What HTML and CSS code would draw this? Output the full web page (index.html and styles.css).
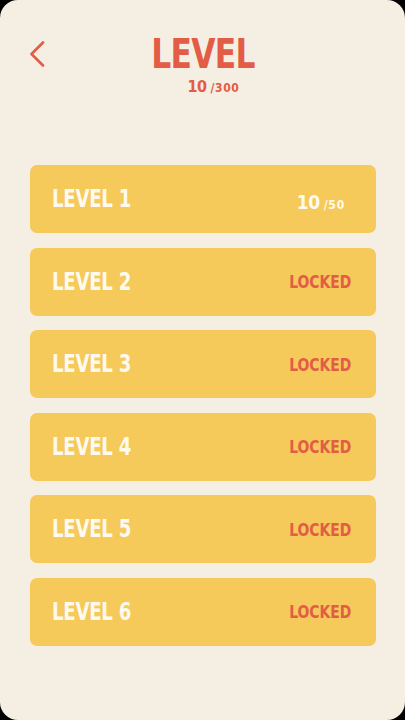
FILE: index.html
```html
<!DOCTYPE html>
<html lang="en">
<head>
<meta charset="utf-8">
<title>Level</title>
<link rel="stylesheet" href="styles.css">
</head>
<body>
<div class="screen">
  <header class="header">
    <button class="back" aria-label="Back">
      <svg width="16" height="26" viewBox="0 0 16 26"><path d="M14 1.5 L2.5 13 L14 24.5" fill="none" stroke="#e25c46" stroke-width="2.6" stroke-linecap="round" stroke-linejoin="round"/></svg>
    </button>
    <div class="title-block">
      <h1 class="title">LEVEL</h1>
      <div class="total"><span class="big">10</span><span class="small">/300</span></div>
    </div>
    <div class="spacer"></div>
  </header>
  <main class="levels">
    <div class="card"><span class="name">LEVEL 1</span><span class="score"><span class="big">10</span><span class="small">/50</span></span></div>
    <div class="card"><span class="name">LEVEL 2</span><span class="locked">LOCKED</span></div>
    <div class="card"><span class="name">LEVEL 3</span><span class="locked">LOCKED</span></div>
    <div class="card"><span class="name">LEVEL 4</span><span class="locked">LOCKED</span></div>
    <div class="card"><span class="name">LEVEL 5</span><span class="locked">LOCKED</span></div>
    <div class="card"><span class="name">LEVEL 6</span><span class="locked">LOCKED</span></div>
  </main>
</div>
</body>
</html>
```
FILE: styles.css
```css
* { box-sizing: border-box; }
html, body { margin: 0; padding: 0; background: #000; }
body {
  font-family: "DejaVu Sans Condensed", "DejaVu Sans", sans-serif;
  font-weight: bold;
}
.screen {
  width: 405px;
  height: 720px;
  background: #f5eee3;
  border-radius: 18px;
  overflow: hidden;
  display: flex;
  flex-direction: column;
}
.header {
  display: grid;
  grid-template-columns: 1fr auto 1fr;
  align-items: start;
  align-content: start;
  height: 165px;
  padding-top: 29px;
  flex-shrink: 0;
}
.back {
  justify-self: start;
  margin-left: 29px;
  margin-top: 12px;
  padding: 0;
  border: 0;
  background: none;
  width: 16px;
  height: 26px;
  display: flex;
}
.title-block {
  display: flex;
  flex-direction: column;
  align-items: center;
}
.title {
  margin: 0;
  font-size: 41px;
  line-height: 50px;
  color: #e25c46;
  letter-spacing: -0.8px;
  transform: scaleX(0.85);
}
.total {
  color: #e25c46;
  padding-left: 22px;
  margin-top: -2px;
  font-size: 16px;
  line-height: 19px;
}
.total .big { font-size: 16px; letter-spacing: -0.5px; }
.total .small { font-size: 12px; margin-left: 4px; letter-spacing: 0.6px; }
.levels {
  display: flex;
  flex-direction: column;
  gap: 14.6px;
  padding: 0 29px 0 30px;
}
.card {
  height: 68px;
  background: #f5c95a;
  border-radius: 7px;
  display: flex;
  align-items: center;
  justify-content: space-between;
  padding: 0 25px 0 22px;
}
.name {
  display: inline-block;
  color: #fffaf0;
  font-size: 24px;
  letter-spacing: -0.3px;
  transform: scaleX(0.84);
  transform-origin: left center;
}
.locked {
  display: inline-block;
  color: #e25c46;
  font-size: 18px;
  transform: scaleX(0.86);
  transform-origin: right center;
}
.score {
  color: #fffaf0;
  margin-right: 6px;
  padding-top: 6px;
}
.score .big { font-size: 19px; letter-spacing: -0.5px; }
.score .small { font-size: 12px; margin-left: 4px; letter-spacing: 0.8px; }
```
